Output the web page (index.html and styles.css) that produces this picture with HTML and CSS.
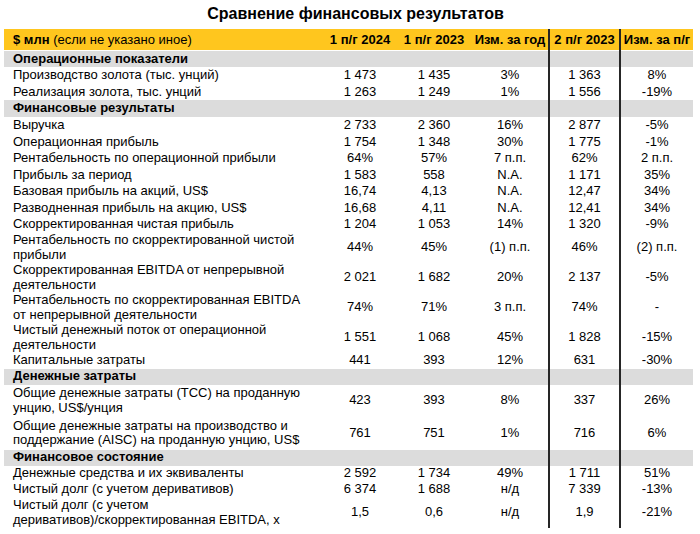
FILE: index.html
```html
<!DOCTYPE html>
<html lang="ru">
<head>
<meta charset="utf-8">
<title>Сравнение финансовых результатов</title>
<link rel="stylesheet" href="styles.css">
</head>
<body>
<div class="page">
  <h1 class="title">Сравнение финансовых результатов</h1>
  <div class="table">
    <div class="row head">
      <div class="cell label"><span><b>$ млн</b> (если не указано иное)</span></div>
      <div class="cell">1 п/г 2024</div>
      <div class="cell">1 п/г 2023</div>
      <div class="cell">Изм. за год</div>
      <div class="cell sep">2 п/г 2023</div>
      <div class="cell sep">Изм. за п/г</div>
    </div>

    <div class="row sec h16"><div class="cell label">Операционные показатели</div><div class="cell"></div><div class="cell"></div><div class="cell"></div><div class="cell sep"></div><div class="cell sep"></div></div>
    <div class="row h17"><div class="cell label">Производство золота (тыс. унций)</div><div class="cell">1 473</div><div class="cell">1 435</div><div class="cell">3%</div><div class="cell sep">1 363</div><div class="cell sep">8%</div></div>
    <div class="row h16"><div class="cell label">Реализация золота, тыс. унций</div><div class="cell">1 263</div><div class="cell">1 249</div><div class="cell">1%</div><div class="cell sep">1 556</div><div class="cell sep">-19%</div></div>

    <div class="row sec h17"><div class="cell label">Финансовые результаты</div><div class="cell"></div><div class="cell"></div><div class="cell"></div><div class="cell sep"></div><div class="cell sep"></div></div>
    <div class="row hf"><div class="cell label">Выручка</div><div class="cell">2 733</div><div class="cell">2 360</div><div class="cell">16%</div><div class="cell sep">2 877</div><div class="cell sep">-5%</div></div>
    <div class="row hf"><div class="cell label">Операционная прибыль</div><div class="cell">1 754</div><div class="cell">1 348</div><div class="cell">30%</div><div class="cell sep">1 775</div><div class="cell sep">-1%</div></div>
    <div class="row hf"><div class="cell label">Рентабельность по операционной прибыли</div><div class="cell">64%</div><div class="cell">57%</div><div class="cell">7 п.п.</div><div class="cell sep">62%</div><div class="cell sep">2 п.п.</div></div>
    <div class="row hf"><div class="cell label">Прибыль за период</div><div class="cell">1 583</div><div class="cell">558</div><div class="cell">N.A.</div><div class="cell sep">1 171</div><div class="cell sep">35%</div></div>
    <div class="row hf"><div class="cell label">Базовая прибыль на акций, US$</div><div class="cell">16,74</div><div class="cell">4,13</div><div class="cell">N.A.</div><div class="cell sep">12,47</div><div class="cell sep">34%</div></div>
    <div class="row hf"><div class="cell label">Разводненная прибыль на акцию, US$</div><div class="cell">16,68</div><div class="cell">4,11</div><div class="cell">N.A.</div><div class="cell sep">12,41</div><div class="cell sep">34%</div></div>
    <div class="row hf"><div class="cell label">Скорректированная чистая прибыль</div><div class="cell">1 204</div><div class="cell">1 053</div><div class="cell">14%</div><div class="cell sep">1 320</div><div class="cell sep">-9%</div></div>
    <div class="row h2"><div class="cell label">Рентабельность по скорректированной чистой<br>прибыли</div><div class="cell">44%</div><div class="cell">45%</div><div class="cell">(1) п.п.</div><div class="cell sep">46%</div><div class="cell sep">(2) п.п.</div></div>
    <div class="row h2"><div class="cell label">Скорректированная EBITDA от непрерывной<br>деятельности</div><div class="cell">2 021</div><div class="cell">1 682</div><div class="cell">20%</div><div class="cell sep">2 137</div><div class="cell sep">-5%</div></div>
    <div class="row h2"><div class="cell label">Рентабельность по скорректированная EBITDA<br>от непрерывной деятельности</div><div class="cell">74%</div><div class="cell">71%</div><div class="cell">3 п.п.</div><div class="cell sep">74%</div><div class="cell sep">-</div></div>
    <div class="row h2"><div class="cell label">Чистый денежный поток от операционной<br>деятельности</div><div class="cell">1 551</div><div class="cell">1 068</div><div class="cell">45%</div><div class="cell sep">1 828</div><div class="cell sep">-15%</div></div>
    <div class="row h16"><div class="cell label">Капитальные затраты</div><div class="cell">441</div><div class="cell">393</div><div class="cell">12%</div><div class="cell sep">631</div><div class="cell sep">-30%</div></div>

    <div class="row sec h16"><div class="cell label">Денежные затраты</div><div class="cell"></div><div class="cell"></div><div class="cell"></div><div class="cell sep"></div><div class="cell sep"></div></div>
    <div class="row h32"><div class="cell label">Общие денежные затраты (TCC) на проданную<br>унцию, US$/унция</div><div class="cell">423</div><div class="cell">393</div><div class="cell">8%</div><div class="cell sep">337</div><div class="cell sep">26%</div></div>
    <div class="row h33"><div class="cell label">Общие денежные затраты на производство и<br>поддержание (AISC) на проданную унцию, US$</div><div class="cell">761</div><div class="cell">751</div><div class="cell">1%</div><div class="cell sep">716</div><div class="cell sep">6%</div></div>

    <div class="row sec h16"><div class="cell label">Финансовое состояние</div><div class="cell"></div><div class="cell"></div><div class="cell"></div><div class="cell sep"></div><div class="cell sep"></div></div>
    <div class="row h16"><div class="cell label">Денежные средства и их эквиваленты</div><div class="cell">2 592</div><div class="cell">1 734</div><div class="cell">49%</div><div class="cell sep">1 711</div><div class="cell sep">51%</div></div>
    <div class="row h16"><div class="cell label">Чистый долг (с учетом деривативов)</div><div class="cell">6 374</div><div class="cell">1 688</div><div class="cell">н/д</div><div class="cell sep">7 339</div><div class="cell sep">-13%</div></div>
    <div class="row h2"><div class="cell label">Чистый долг (с учетом<br>деривативов)/скорректированная EBITDA, x</div><div class="cell">1,5</div><div class="cell">0,6</div><div class="cell">н/д</div><div class="cell sep">1,9</div><div class="cell sep">-21%</div></div>
  </div>
</div>
</body>
</html>
```
FILE: styles.css
```css
* { box-sizing: border-box; }
html, body {
  margin: 0;
  padding: 0;
  background: #fff;
}
body {
  font-family: "Liberation Sans", Arial, sans-serif;
  color: #000;
  font-size: 13px;
}
.page {
  width: 700px;
  padding: 4px 0 0 4px;
}
.title {
  margin: 0;
  padding-left: 14px;
  font-size: 16px;
  line-height: 19px;
  font-weight: bold;
  text-align: center;
  width: 689px;
}
.table {
  margin-top: 6px;
  width: 689px;
}
.row {
  display: grid;
  grid-template-columns: 320px 72px 76px 76px 71px 74px;
}
.cell {
  display: flex;
  align-items: center;
  justify-content: center;
  text-align: center;
  white-space: nowrap;
  line-height: 14.5px;
}
.cell.label {
  justify-content: flex-start;
  text-align: left;
  padding-left: 9px;
}
.cell.sep {
  border-left: 2px solid #262626;
}
.head {
  height: 22px;
}
.head .cell {
  background: #ffc61e;
  box-shadow: inset 0 -1px 0 #fff;
  font-weight: bold;
}
.head .cell.label {
  font-weight: normal;
}
.sec .cell {
  background: #dcdcdc;
}
.sec .cell.label {
  font-weight: bold;
}
.h16 { height: 16px; }
.h17 { height: 17px; }
.hf { height: 16.5px; }
.h2 { height: 30px; }
.h32 { height: 32px; }
.h33 { height: 33px; }
```
